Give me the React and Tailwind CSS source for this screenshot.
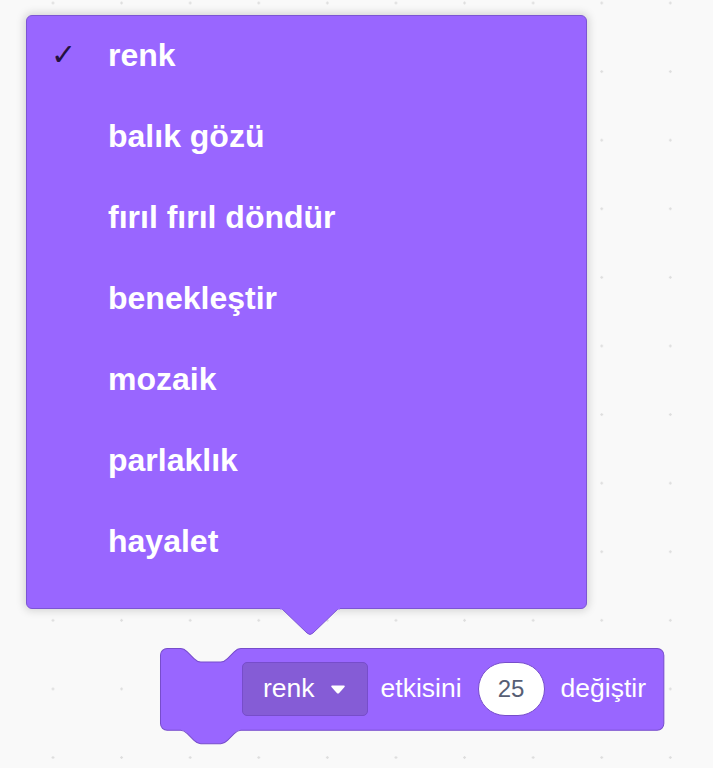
import React from 'react';

const items = ['renk', 'balık gözü', 'fırıl fırıl döndür', 'benekleştir', 'mozaik', 'parlaklık', 'hayalet'];

const blockPath =
  'M0,4 A4,4 0 0,1 4,0 H12 c2,0 3,1 4,2 l4,4 c1,1 2,2 4,2 h12 c2,0 3,-1 4,-2 l4,-4 c1,-1 2,-2 4,-2 H296.5 a4,4 0 0,1 4,4 V44.8 a4,4 0 0,1 -4,4 H48 c-2,0 -3,1 -4,2 l-4,4 c-1,1 -2,2 -4,2 h-12 c-2,0 -3,-1 -4,-2 l-4,-4 c-1,-1 -2,-2 -4,-2 H4 a4,4 0 0,1 -4,-4 z';

const Menu = () => (
    <div className="relative ml-[26px] mt-[15px] w-[561px] h-[594px] rounded-[6px] bg-[#9966ff] border border-[#7c55d4] shadow-[0_0_8px_2px_rgba(0,0,0,0.15)]">
        <ul className="flex flex-col -mt-[2px]">
            {items.map((item, i) => (
                <li key={item} className="flex items-center h-[81px] pl-[24px]">
                    <span className="w-[57px] text-[30px] font-bold leading-none text-[#24113f] font-['DejaVu_Sans',sans-serif]">
                        {i === 0 ? '✓' : ''}
                    </span>
                    <span className="text-[32px] font-bold text-white font-['Liberation_Sans',Arial,sans-serif]">{item}</span>
                </li>
            ))}
        </ul>
        {/* pointer under the menu */}
        <svg className="absolute left-[253px] top-[592px]" width="60" height="30" viewBox="0 0 60 30">
            <path d="M1,0 L27,25 Q30,28 33,25 L59,0 Z" fill="#9966ff" />
            <path d="M1,0 L27,25 Q30,28 33,25 L59,0" fill="none" stroke="#7c55d4" strokeWidth="1" />
            <rect x="0" y="0" width="60" height="1.5" fill="#9966ff" />
        </svg>
    </div>
);

const Block = () => (
    <div className="relative ml-[160px] mt-[39px] w-[505px] h-[82px]">
        <svg className="absolute left-0 top-0 overflow-visible" width="505" height="97" viewBox="0 0 505 97">
            <g transform="translate(0.5,0.5) scale(1.675)">
                <path d={blockPath} fill="#9966ff" stroke="#774dcb" strokeWidth="0.6" />
            </g>
        </svg>
        <div className="relative flex items-center h-full pl-[82px] text-[26.5px] text-white font-['Liberation_Sans',Arial,sans-serif]">
            <div className="flex items-center h-[54px] pl-[20px] pr-[21px] rounded-[5px] bg-[#855cd6] border border-[#774dcb]">
                <span>renk</span>
                <svg className="ml-[15px]" width="16" height="11" viewBox="0 0 16 11">
                    <path d="M2,1.5 H14 Q15.5,1.5 14.5,3 L9.2,9 Q8,10.2 6.8,9 L1.5,3 Q0.5,1.5 2,1.5 Z" fill="#ffffff" />
                </svg>
            </div>
            <span className="ml-[13px]">etkisini</span>
            <div className="ml-[16px] flex items-center justify-center w-[67px] h-[54px] rounded-full bg-white border border-[#774dcb] text-[24px] text-[#575e75]">
                25
            </div>
            <span className="ml-[16px]">değiştir</span>
        </div>
    </div>
);

const App = () => {
    return (
        <div className="w-full min-h-screen overflow-hidden pt-px bg-[#f9f9f9] bg-[radial-gradient(circle,#dedede_1px,transparent_1.5px)] bg-[size:68.6px_68.6px] bg-[position:18.7px_37.3px]">
            <div className="-mt-px">
                <Menu />
                <Block />
            </div>
        </div>
    );
};

export default App;
